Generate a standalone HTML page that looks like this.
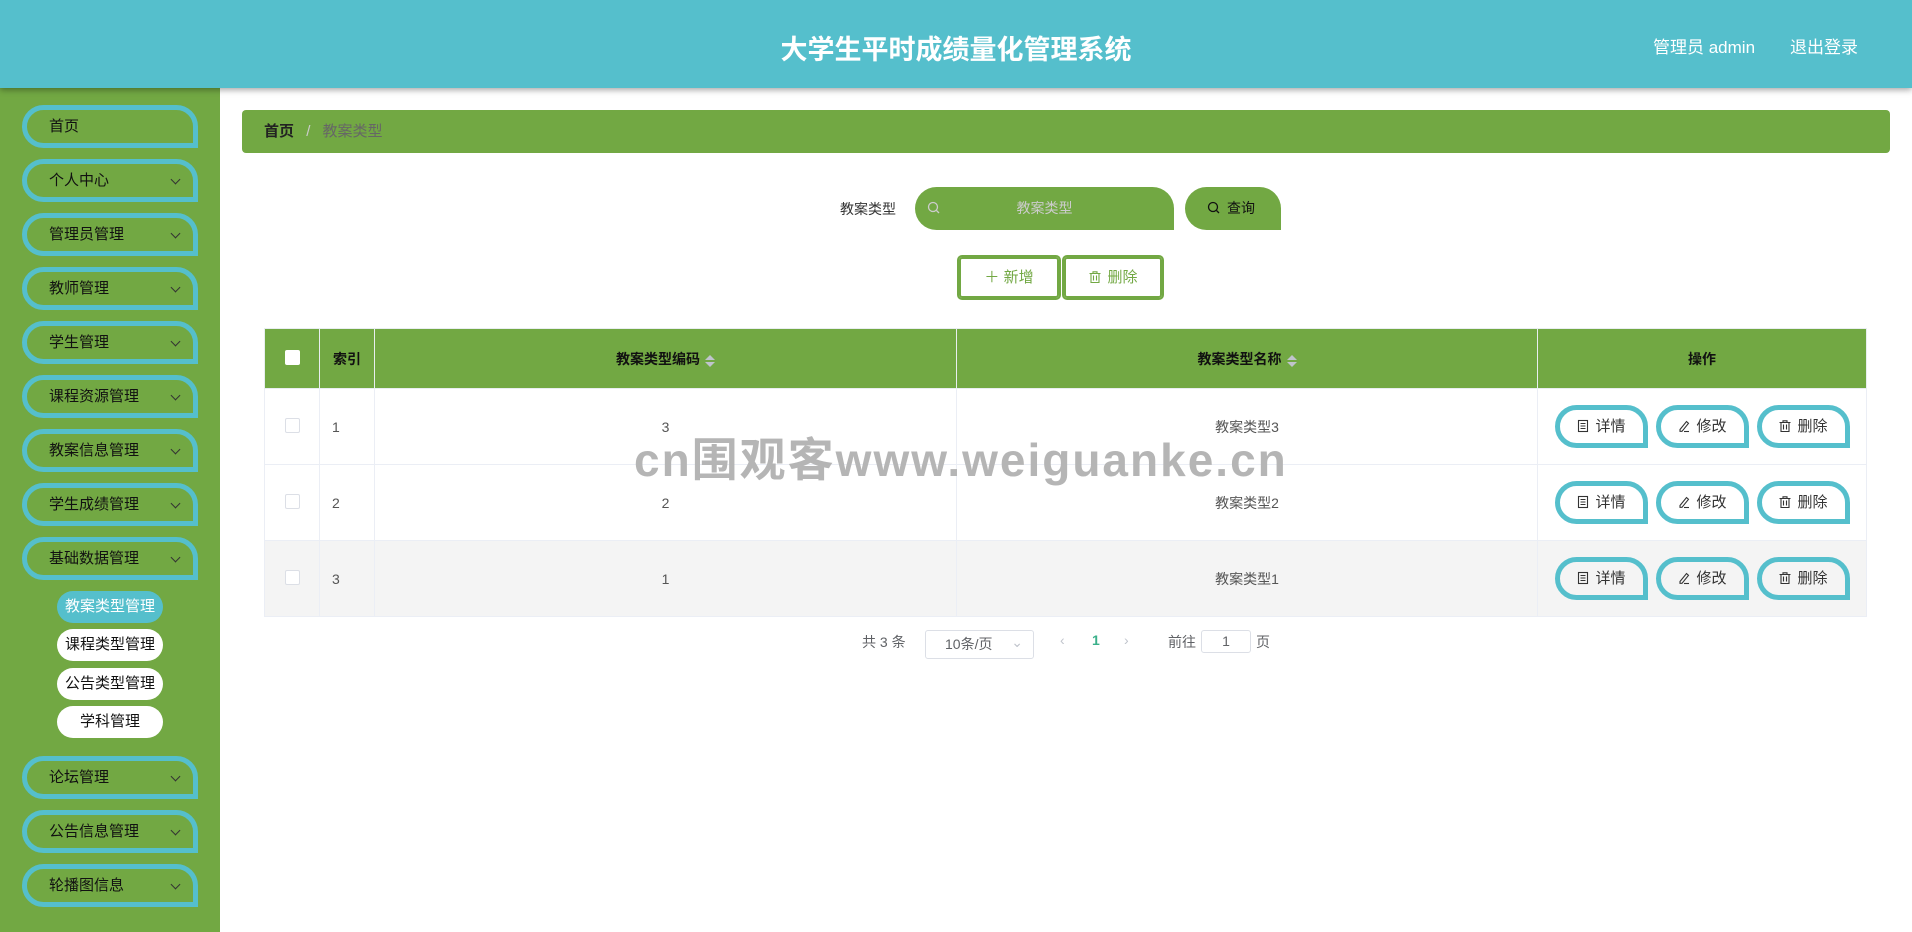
<!DOCTYPE html>
<html><head><meta charset="utf-8"><style>
*{margin:0;padding:0;box-sizing:border-box}
body{width:1912px;height:932px;overflow:hidden;font-family:"Liberation Sans","Noto Sans CJK SC",sans-serif;background:#fff;position:relative;color:#333}
.hdr{position:absolute;left:0;top:0;width:1912px;height:88px;background:#55bfcc;box-shadow:0 2px 6px rgba(0,0,0,.35);z-index:2}
.hdr .t{position:absolute;left:0;width:1912px;top:28px;text-align:center;color:#fff;font-size:27px;font-weight:bold}
.hdr .r{position:absolute;top:33px;color:#fff;font-size:17px}
.side{position:absolute;left:0;top:88px;width:220px;height:844px;background:#72a843}
.mi{position:absolute;left:22px;width:176px;height:43px;border:5px solid #55bfcc;border-radius:22px 22px 0 22px;font-size:15px;color:#111;padding-left:22px;line-height:33px}
.mi .ar{position:absolute;right:14px;top:12px;width:7px;height:7px;border-right:1px solid #333;border-bottom:1px solid #333;transform:rotate(45deg)}
.sub{position:absolute;left:57px;width:106px;height:32px;border-radius:16px;background:#fff;color:#111;font-size:15px;text-align:center;line-height:32px}
.bc{position:absolute;left:242px;top:110px;width:1648px;height:43px;background:#72a843;border-radius:4px;font-size:15px;line-height:43px;padding-left:22px}
.pill{position:absolute;background:#72a843;border-radius:22px 22px 0 22px;height:43px}
.ob{position:absolute;height:41px;border:2px solid #72a843;border-radius:3px;outline:2px solid #72a843;color:#72a843;font-size:15px;text-align:center;line-height:37px}
table{position:absolute;left:264px;top:328px;width:1603px;border-collapse:collapse;font-size:14px}
th{background:#72a843;height:60px;color:#111;font-weight:bold;border:1px solid #e8eef0;text-align:center}
td{height:76px;border:1px solid #ebeef5;text-align:center;color:#555}
tr.g td{background:#f4f4f4}
.cb{display:inline-block;width:15px;height:15px;border:1px solid #dcdfe6;border-radius:2px;background:#fff}
.b{display:inline-block;width:93px;height:43px;border:5px solid #55bfcc;border-radius:22px 22px 0 22px;margin:0 4px;line-height:33px;color:#333;font-size:15px;vertical-align:middle}
.b svg,.ob svg{vertical-align:-2px;margin-right:5px}
.sort{display:inline-block;vertical-align:middle;margin-left:5px;width:0;height:0;border:5px solid transparent;border-bottom-color:#c0c4cc;position:relative;top:-5px}
.sort:after{content:"";position:absolute;left:-5px;top:7px;border:5px solid transparent;border-top-color:#c0c4cc}
.wm{position:absolute;left:634px;top:424px;font-size:46px;font-weight:bold;color:#b5b5b5;letter-spacing:2px;z-index:3}
.pg{position:absolute;top:632px;font-size:14px;color:#606266}
</style></head><body>
<svg width="0" height="0" style="position:absolute">
<symbol id="doc" viewBox="0 0 14 14"><rect x="2.5" y="1.5" width="9" height="11" fill="none" stroke="#333" stroke-width="1.1"/><path d="M4.5 4.5h5M4.5 7h5M4.5 9.5h5" stroke="#333" stroke-width="1"/></symbol>
<symbol id="pen" viewBox="0 0 14 14"><path d="M3 10.5L9.5 2.5l2 1.8L5 12.3H3z" fill="none" stroke="#333" stroke-width="1.1"/><path d="M7 12.5h5" stroke="#333" stroke-width="1.1"/></symbol>
<symbol id="bin" viewBox="0 0 14 14"><path d="M1.5 3.5h11M5 3.5V1.8h4v1.7M3 3.5v9h8v-9M5.5 5.5v5M8.5 5.5v5" fill="none" stroke="currentColor" stroke-width="1.1"/></symbol>
</svg>
<div class="hdr"><div class="t">大学生平时成绩量化管理系统</div>
<div class="r" style="left:1653px">管理员 admin</div><div class="r" style="left:1790px">退出登录</div></div>
<div class="side">
<div class="mi" style="top:17px">首页</div>
<div class="mi" style="top:71px">个人中心<i class="ar"></i></div>
<div class="mi" style="top:125px">管理员管理<i class="ar"></i></div>
<div class="mi" style="top:179px">教师管理<i class="ar"></i></div>
<div class="mi" style="top:233px">学生管理<i class="ar"></i></div>
<div class="mi" style="top:287px">课程资源管理<i class="ar"></i></div>
<div class="mi" style="top:341px">教案信息管理<i class="ar"></i></div>
<div class="mi" style="top:395px">学生成绩管理<i class="ar"></i></div>
<div class="mi" style="top:449px">基础数据管理<i class="ar"></i></div>
<div class="sub" style="top:503px;background:#55bfcc;color:#fff">教案类型管理</div>
<div class="sub" style="top:541px">课程类型管理</div>
<div class="sub" style="top:580px">公告类型管理</div>
<div class="sub" style="top:618px">学科管理</div>
<div class="mi" style="top:668px">论坛管理<i class="ar"></i></div>
<div class="mi" style="top:722px">公告信息管理<i class="ar"></i></div>
<div class="mi" style="top:776px">轮播图信息<i class="ar"></i></div>
</div>
<div class="bc"><b style="color:#222">首页</b> <span style="color:#ccc;margin:0 8px">/</span> <span style="color:#666">教案类型</span></div>
<div style="position:absolute;left:840px;top:199px;font-size:14px;color:#333">教案类型</div>
<div class="pill" style="left:915px;top:187px;width:259px"><svg style="position:absolute;left:12px;top:14px" width="14" height="14" viewBox="0 0 14 14"><circle cx="6" cy="6" r="4.5" fill="none" stroke="#ccc" stroke-width="1.3"/><path d="M9.5 9.5L12 12" stroke="#ccc" stroke-width="1.3"/></svg><span style="position:absolute;left:0;width:259px;text-align:center;top:11px;color:#ccc;font-size:14px">教案类型</span></div>
<div class="pill" style="left:1185px;top:187px;width:96px"><svg style="position:absolute;left:22px;top:14px" width="14" height="14" viewBox="0 0 14 14"><circle cx="6" cy="6" r="4.5" fill="none" stroke="#111" stroke-width="1.3"/><path d="M9.5 9.5L12 12" stroke="#111" stroke-width="1.3"/></svg><span style="position:absolute;left:42px;top:11px;color:#111;font-size:14px">查询</span></div>
<div class="ob" style="left:959px;top:257px;width:100px">＋ 新增</div>
<div class="ob" style="left:1064px;top:257px;width:98px"><svg width="14" height="14" style="color:#72a843"><use href="#bin"/></svg>删除</div>
<table>
<tr><th style="width:55px"><span class="cb" style="border:none"></span></th><th style="width:55px">索引</th><th style="width:582px">教案类型编码<i class="sort"></i></th><th style="width:581px">教案类型名称<i class="sort"></i></th><th>操作</th></tr>
<tr><td><span class="cb"></span></td><td style="text-align:left;padding-left:12px">1</td><td>3</td><td>教案类型3</td><td><span class="b"><svg width="14" height="14"><use href="#doc"/></svg>详情</span><span class="b"><svg width="14" height="14"><use href="#pen"/></svg>修改</span><span class="b"><svg width="14" height="14" style="color:#333"><use href="#bin"/></svg>删除</span></td></tr>
<tr><td><span class="cb"></span></td><td style="text-align:left;padding-left:12px">2</td><td>2</td><td>教案类型2</td><td><span class="b"><svg width="14" height="14"><use href="#doc"/></svg>详情</span><span class="b"><svg width="14" height="14"><use href="#pen"/></svg>修改</span><span class="b"><svg width="14" height="14" style="color:#333"><use href="#bin"/></svg>删除</span></td></tr>
<tr class="g"><td><span class="cb"></span></td><td style="text-align:left;padding-left:12px">3</td><td>1</td><td>教案类型1</td><td><span class="b"><svg width="14" height="14"><use href="#doc"/></svg>详情</span><span class="b"><svg width="14" height="14"><use href="#pen"/></svg>修改</span><span class="b"><svg width="14" height="14" style="color:#333"><use href="#bin"/></svg>删除</span></td></tr>
</table>
<div class="wm">cn围观客www.weiguanke.cn</div>
<div class="pg" style="left:862px">共 3 条</div>
<div class="pg" style="left:925px;top:630px;width:109px;height:29px;border:1px solid #dcdfe6;border-radius:3px;line-height:27px;padding-left:19px">10条/页<span style="position:absolute;right:10px;top:-2px;color:#c0c4cc">⌄</span></div>
<div class="pg" style="left:1060px;color:#c0c4cc">‹</div>
<div class="pg" style="left:1092px;color:#3ab08a;font-weight:bold">1</div>
<div class="pg" style="left:1124px;color:#c0c4cc">›</div>
<div class="pg" style="left:1168px">前往</div>
<div class="pg" style="left:1201px;top:630px;width:50px;height:23px;border:1px solid #dcdfe6;border-radius:3px;text-align:center;line-height:21px">1</div>
<div class="pg" style="left:1256px">页</div>
</body></html>
